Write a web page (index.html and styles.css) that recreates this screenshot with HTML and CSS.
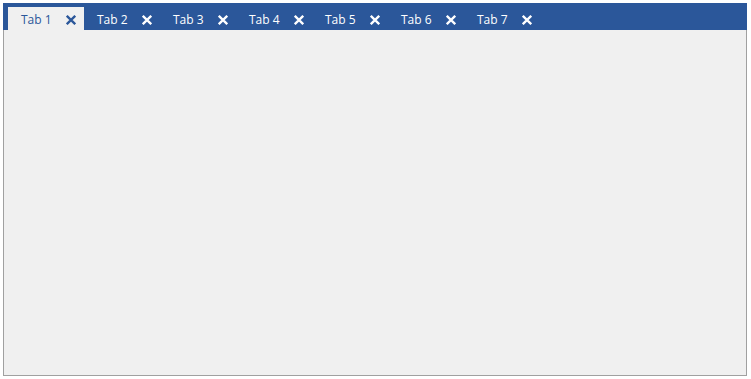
FILE: index.html
```html
<!DOCTYPE html>
<html>
<head>
<meta charset="utf-8">
<link rel="stylesheet" href="styles.css">
</head>
<body>
<div class="tabcontrol">
  <div class="tabbar">
    <div class="tab active"><span class="label">Tab 1</span><svg class="close" viewBox="0 0 10 10"><path d="M0.8 0.8L9.2 9.2M9.2 0.8L0.8 9.2"/></svg></div>
    <div class="tab"><span class="label">Tab 2</span><svg class="close" viewBox="0 0 10 10"><path d="M0.8 0.8L9.2 9.2M9.2 0.8L0.8 9.2"/></svg></div>
    <div class="tab"><span class="label">Tab 3</span><svg class="close" viewBox="0 0 10 10"><path d="M0.8 0.8L9.2 9.2M9.2 0.8L0.8 9.2"/></svg></div>
    <div class="tab"><span class="label">Tab 4</span><svg class="close" viewBox="0 0 10 10"><path d="M0.8 0.8L9.2 9.2M9.2 0.8L0.8 9.2"/></svg></div>
    <div class="tab"><span class="label">Tab 5</span><svg class="close" viewBox="0 0 10 10"><path d="M0.8 0.8L9.2 9.2M9.2 0.8L0.8 9.2"/></svg></div>
    <div class="tab"><span class="label">Tab 6</span><svg class="close" viewBox="0 0 10 10"><path d="M0.8 0.8L9.2 9.2M9.2 0.8L0.8 9.2"/></svg></div>
    <div class="tab"><span class="label">Tab 7</span><svg class="close" viewBox="0 0 10 10"><path d="M0.8 0.8L9.2 9.2M9.2 0.8L0.8 9.2"/></svg></div>
  </div>
  <div class="content"></div>
</div>
</body>
</html>
```

FILE: styles.css
```css
html, body {
  margin: 0;
  padding: 0;
  background: #ffffff;
}
body {
  font-family: "Open Sans", "Noto Sans", sans-serif;
}
.tabcontrol {
  margin: 3px;
  width: 744px;
  display: flex;
  flex-direction: column;
}
.tabbar {
  height: 27px;
  box-sizing: border-box;
  background: #2b579a;
  padding: 4px 0 0 5px;
  display: flex;
}
.tab {
  width: 76px;
  height: 23px;
  box-sizing: border-box;
  padding: 3px 0 0 13px;
  display: flex;
  align-items: center;
  color: #ffffff;
  font-size: 12px;
}
.tab .label {
  width: 45px;
  line-height: 16px;
}
.tab.active {
  background: #f0f0f0;
  color: #2b579a;
}
.close {
  width: 10px;
  height: 10px;
  stroke: #ffffff;
  stroke-width: 2.3;
  fill: none;
}
.tab.active .close {
  stroke: #2b579a;
}
.content {
  height: 346px;
  box-sizing: border-box;
  background: #f0f0f0;
  border: 1px solid #a0a0a0;
  border-top: none;
}
```
